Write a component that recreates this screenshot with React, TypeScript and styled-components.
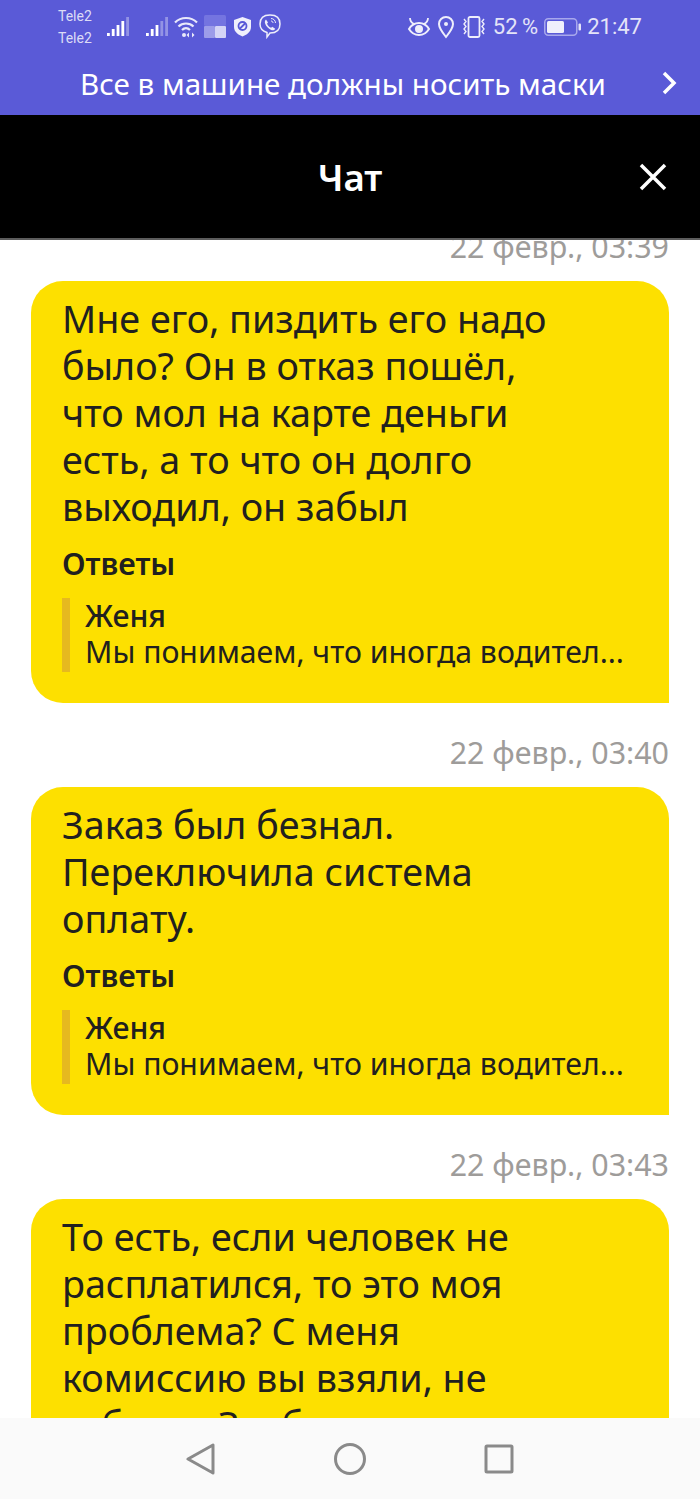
import React from 'react';
import styled, { createGlobalStyle } from 'styled-components';

const Global = createGlobalStyle`
  html, body { margin: 0; padding: 0; background: #fff; }
  body { font-family: "Noto Sans", "Open Sans", sans-serif; }
`;

const Screen = styled.div`
  width: 700px;
  height: 1499px;
  display: flex;
  flex-direction: column;
  overflow: hidden;
`;

const Top = styled.header`
  height: 115px;
  flex: none;
  background: #5a5ad7;
  color: #fff;
`;

const StatusBar = styled.div`
  height: 53px;
  display: flex;
  align-items: center;
  justify-content: space-between;
  padding: 0 58px;
  color: #e4e4f8;
`;

const StatusGroup = styled.div`
  display: flex;
  align-items: center;
  gap: 6px;
`;

const Carriers = styled.div`
  font-family: Roboto, sans-serif;
  font-size: 14px;
  line-height: 22px;
  width: 41px;
  color: #dcdcf6;
`;

const SignalGap = styled.span`
  width: 3px;
`;

const StatusText = styled.span`
  font-family: Roboto, sans-serif;
  font-size: 22px;
  line-height: 28px;
  white-space: pre;
`;

const Banner = styled.div`
  height: 62px;
  padding: 0 22px 2px 80px;
  box-sizing: border-box;
  display: flex;
  align-items: center;
  justify-content: space-between;
  font-size: 29.6px;
`;

const ChatHeader = styled.div`
  flex: none;
  height: 85px;
  padding-top: 38px;
  background: #000;
  color: #fff;
  border-bottom: 2px solid #5c5c5c;
  position: relative;
  display: flex;
  justify-content: center;
`;

const Title = styled.div`
  font-size: 36.7px;
  line-height: 48px;
  font-weight: 600;
`;

const Close = styled.svg`
  position: absolute;
  right: 33px;
  top: 48px;
`;

const Feed = styled.main`
  flex: 1;
  min-height: 0;
  overflow: hidden;
  padding: 0 31px;
`;

const FeedInner = styled.div`
  margin-top: -10px;
  display: flex;
  flex-direction: column;
`;

const Stamp = styled.div`
  text-align: right;
  font-size: 30.4px;
  line-height: 34px;
  color: #9e9c9a;
  margin-bottom: 17px;
`;

const Bubble = styled.article`
  background: #fde000;
  color: #21201f;
  border-radius: 32px 32px 0 32px;
  padding: 14px 31px 31px;
  margin-bottom: 33px;
`;

const Body = styled.div`
  font-size: 37.7px;
  line-height: 47px;
`;

const RepliesLabel = styled.div`
  font-size: 30.500px;
  line-height: 38px;
  font-weight: 600;
  margin-top: 14px;
`;

const Reply = styled.div`
  margin-top: 16px;
  border-left: 8px solid #e6b91f;
  padding-left: 15px;
  height: 74px;
  font-size: 30.2px;
  line-height: 36px;
  white-space: nowrap;
`;

const ReplyName = styled.div`
  font-weight: 500;
`;

const NavBar = styled.nav`
  flex: none;
  height: 81px;
  background: #fafafa;
  display: flex;
  justify-content: center;
  align-items: center;
  gap: 118px;
`;

const Signal = ({ lit }: { lit: number }) => (
  <svg width="24" height="22" viewBox="0 0 24 22">
    {[3, 7, 11, 15, 19].map((h, i) => (
      <rect key={h} x={2 + i * 4.8} y={20 - h} width="2.8" height={h} fill="#fff" opacity={i < lit ? 1 : 0.35} />
    ))}
  </svg>
);

const Wifi = () => (
  <svg width="24" height="24" viewBox="0 0 24 24" fill="none" stroke="#e9e9fa" strokeWidth="2.200">
    <path d="M1 7.500c6-6 16-6 22 0" />
    <path d="M4.500 11.500c4-4 11-4 15 0" />
    <path d="M8 15c2.500-2.500 5.500-2.500 8 0" />
    <circle cx="10" cy="20" r="2" fill="#e9e9fa" stroke="none" />
    <path d="M15 17.500l-2.500 2.500 2.500 2.500zM18 17.500l2.500 2.500-2.500 2.500z" fill="#e9e9fa" stroke="none" />
  </svg>
);

const Tiles = () => (
  <svg width="22" height="23" viewBox="0 0 22 23">
    <rect x="0" y="0" width="22" height="11" rx="1.500" fill="#7474e0" />
    <rect x="0" y="11" width="11" height="12" rx="1" fill="#9c9ce9" />
    <rect x="11" y="11" width="11" height="12" rx="1" fill="#d4d4f6" />
  </svg>
);

const Shield = () => (
  <svg width="21" height="21" viewBox="-1.500 0 21 21">
    <path d="M9 1l8.500 3v7c0 5-4.500 8-8.500 9.500C5 19 .5 16 .5 11V4z" fill="#f0f0fc" />
    <circle cx="9" cy="10" r="4" fill="none" stroke="#5a5ad7" strokeWidth="1.800" />
    <path d="M6 13l6-6" stroke="#5a5ad7" strokeWidth="1.800" />
  </svg>
);

const Viber = () => (
  <svg width="22" height="25" viewBox="0 0 22 25" fill="none" stroke="#eeeefb" strokeWidth="1.500">
    <path d="M11 1c6 0 10 3 10 9s-4 9-10 9l-3 4v-4.500C3 17 1 14 1 10c0-6 4-9 10-9z" />
    <path d="M7 5.500l2 3-1 1.200c.8 2 2.200 3.300 4.200 4.100l1-1.100 3 2c-.8 1.700-2.700 2-4 1.300-3-1.300-5-3.600-6-6.200-.7-1.800-.2-3.400.8-4.300z" fill="#eeeefb" stroke="none" />
    <path d="M12 4.500c2.500 0 4.500 2 4.500 4.500M12 7c1.200 0 2 .9 2 2" strokeWidth="1" />
  </svg>
);

const Eye = () => (
  <svg width="24" height="22" viewBox="0 0 24 22" fill="none" stroke="#eeeefb" strokeWidth="2">
    <path d="M2 13c3-5 7-6 10-6s7 1 10 6c-3 5-7 6-10 6s-7-1-10-6z" />
    <circle cx="12" cy="13" r="4" fill="#eeeefb" stroke="none" />
    <path d="M3 2c0 3 2 5 4 6M21 2c0 3-2 5-4 6" strokeWidth="1.800" />
  </svg>
);

const Pin = () => (
  <svg width="18" height="24" viewBox="0 0 18 24" fill="none" stroke="#eeeefb" strokeWidth="2">
    <path d="M9 22C5 17 2 13 2 9a7 7 0 0 1 14 0c0 4-3 8-7 13z" />
    <circle cx="9" cy="9" r="2" fill="#eeeefb" stroke="none" />
  </svg>
);

const Vibrate = () => (
  <svg width="26" height="22" viewBox="0 0 26 22" fill="none" stroke="#eeeefb" strokeWidth="1.800">
    <rect x="7.500" y="1" width="11" height="20" rx="1.500" />
    <path d="M3 3l2 2.500-2 2.500 2 2.500-2 2.500 2 2.500-2 2.500M23 3l-2 2.500 2 2.500-2 2.500 2 2.500-2 2.500 2 2.500" strokeWidth="1.400" />
  </svg>
);

const Battery = () => (
  <svg width="37" height="18" viewBox="0 0 37 18">
    <rect x="0.750" y="0.750" width="32" height="16.500" rx="3.500" fill="none" stroke="#a8a8ec" strokeWidth="1.500" />
    <rect x="3" y="3" width="17" height="12" rx="1.500" fill="#f0f0fc" />
    <rect x="34.500" y="5.500" width="2.500" height="7" rx="1" fill="#e4e4f8" />
  </svg>
);

const Chevron = () => (
  <svg width="16" height="24" viewBox="0 0 16 24" fill="none" stroke="#fff" strokeWidth="3.500">
    <path d="M2 2l10 10L2 22" />
  </svg>
);

type Message = { time: string; lines: string[]; reply?: boolean };

const messages: Message[] = [
  {
    time: '22 февр., 03:39',
    lines: ['Мне его, пиздить его надо', 'было? Он в отказ пошёл,', 'что мол на карте деньги', 'есть, а то что он долго', 'выходил, он забыл'],
    reply: true,
  },
  {
    time: '22 февр., 03:40',
    lines: ['Заказ был безнал.', 'Переключила система', 'оплату.'],
    reply: true,
  },
  {
    time: '22 февр., 03:43',
    lines: ['То есть, если человек не', 'расплатился, то это моя', 'проблема? С меня', 'комиссию вы взяли, не', 'забыли. Заебись'],
  },
];

export default function App() {
  return (
    <Screen>
      <Global />
      <Top>
        <StatusBar>
          <StatusGroup>
            <Carriers>
              Tele2
              <br />
              Tele2
            </Carriers>
            <Signal lit={4} />
            <SignalGap />
            <Signal lit={3} />
            <Wifi />
            <Tiles />
            <Shield />
            <Viber />
          </StatusGroup>
          <StatusGroup>
            <Eye />
            <Pin />
            <Vibrate />
            <StatusText>52{'\u2009'}%</StatusText>
            <Battery />
            <StatusText>21:47</StatusText>
          </StatusGroup>
        </StatusBar>
        <Banner>
          <span>Все в машине должны носить маски</span>
          <Chevron />
        </Banner>
      </Top>
      <ChatHeader>
        <Title>Чат</Title>
        <Close width="28" height="28" viewBox="0 0 28 28" fill="none" stroke="#fff" strokeWidth="3.500">
          <path d="M2 2l24 24M26 2L2 26" />
        </Close>
      </ChatHeader>
      <Feed>
        <FeedInner>
          {messages.map((m) => (
            <React.Fragment key={m.time}>
              <Stamp>{m.time}</Stamp>
              <Bubble>
                <Body>
                  {m.lines.map((l) => (
                    <div key={l}>{l}</div>
                  ))}
                </Body>
                {m.reply && (
                  <>
                    <RepliesLabel>Ответы</RepliesLabel>
                    <Reply>
                      <ReplyName>Женя</ReplyName>
                      <div>Мы понимаем, что иногда водител...</div>
                    </Reply>
                  </>
                )}
              </Bubble>
            </React.Fragment>
          ))}
        </FeedInner>
      </Feed>
      <NavBar>
        <svg width="30" height="32" viewBox="0 0 30 32" fill="none" stroke="#8a8a8a" strokeWidth="3" strokeLinejoin="round">
          <path d="M27 2v28L2 16z" />
        </svg>
        <svg width="32" height="32" viewBox="0 0 32 32" fill="none" stroke="#8a8a8a" strokeWidth="3">
          <circle cx="16" cy="16" r="14.500" />
        </svg>
        <svg width="30" height="30" viewBox="0 0 30 30" fill="none" stroke="#8a8a8a" strokeWidth="3" strokeLinejoin="round">
          <rect x="2" y="2" width="26" height="26" rx="1" />
        </svg>
      </NavBar>
    </Screen>
  );
}
